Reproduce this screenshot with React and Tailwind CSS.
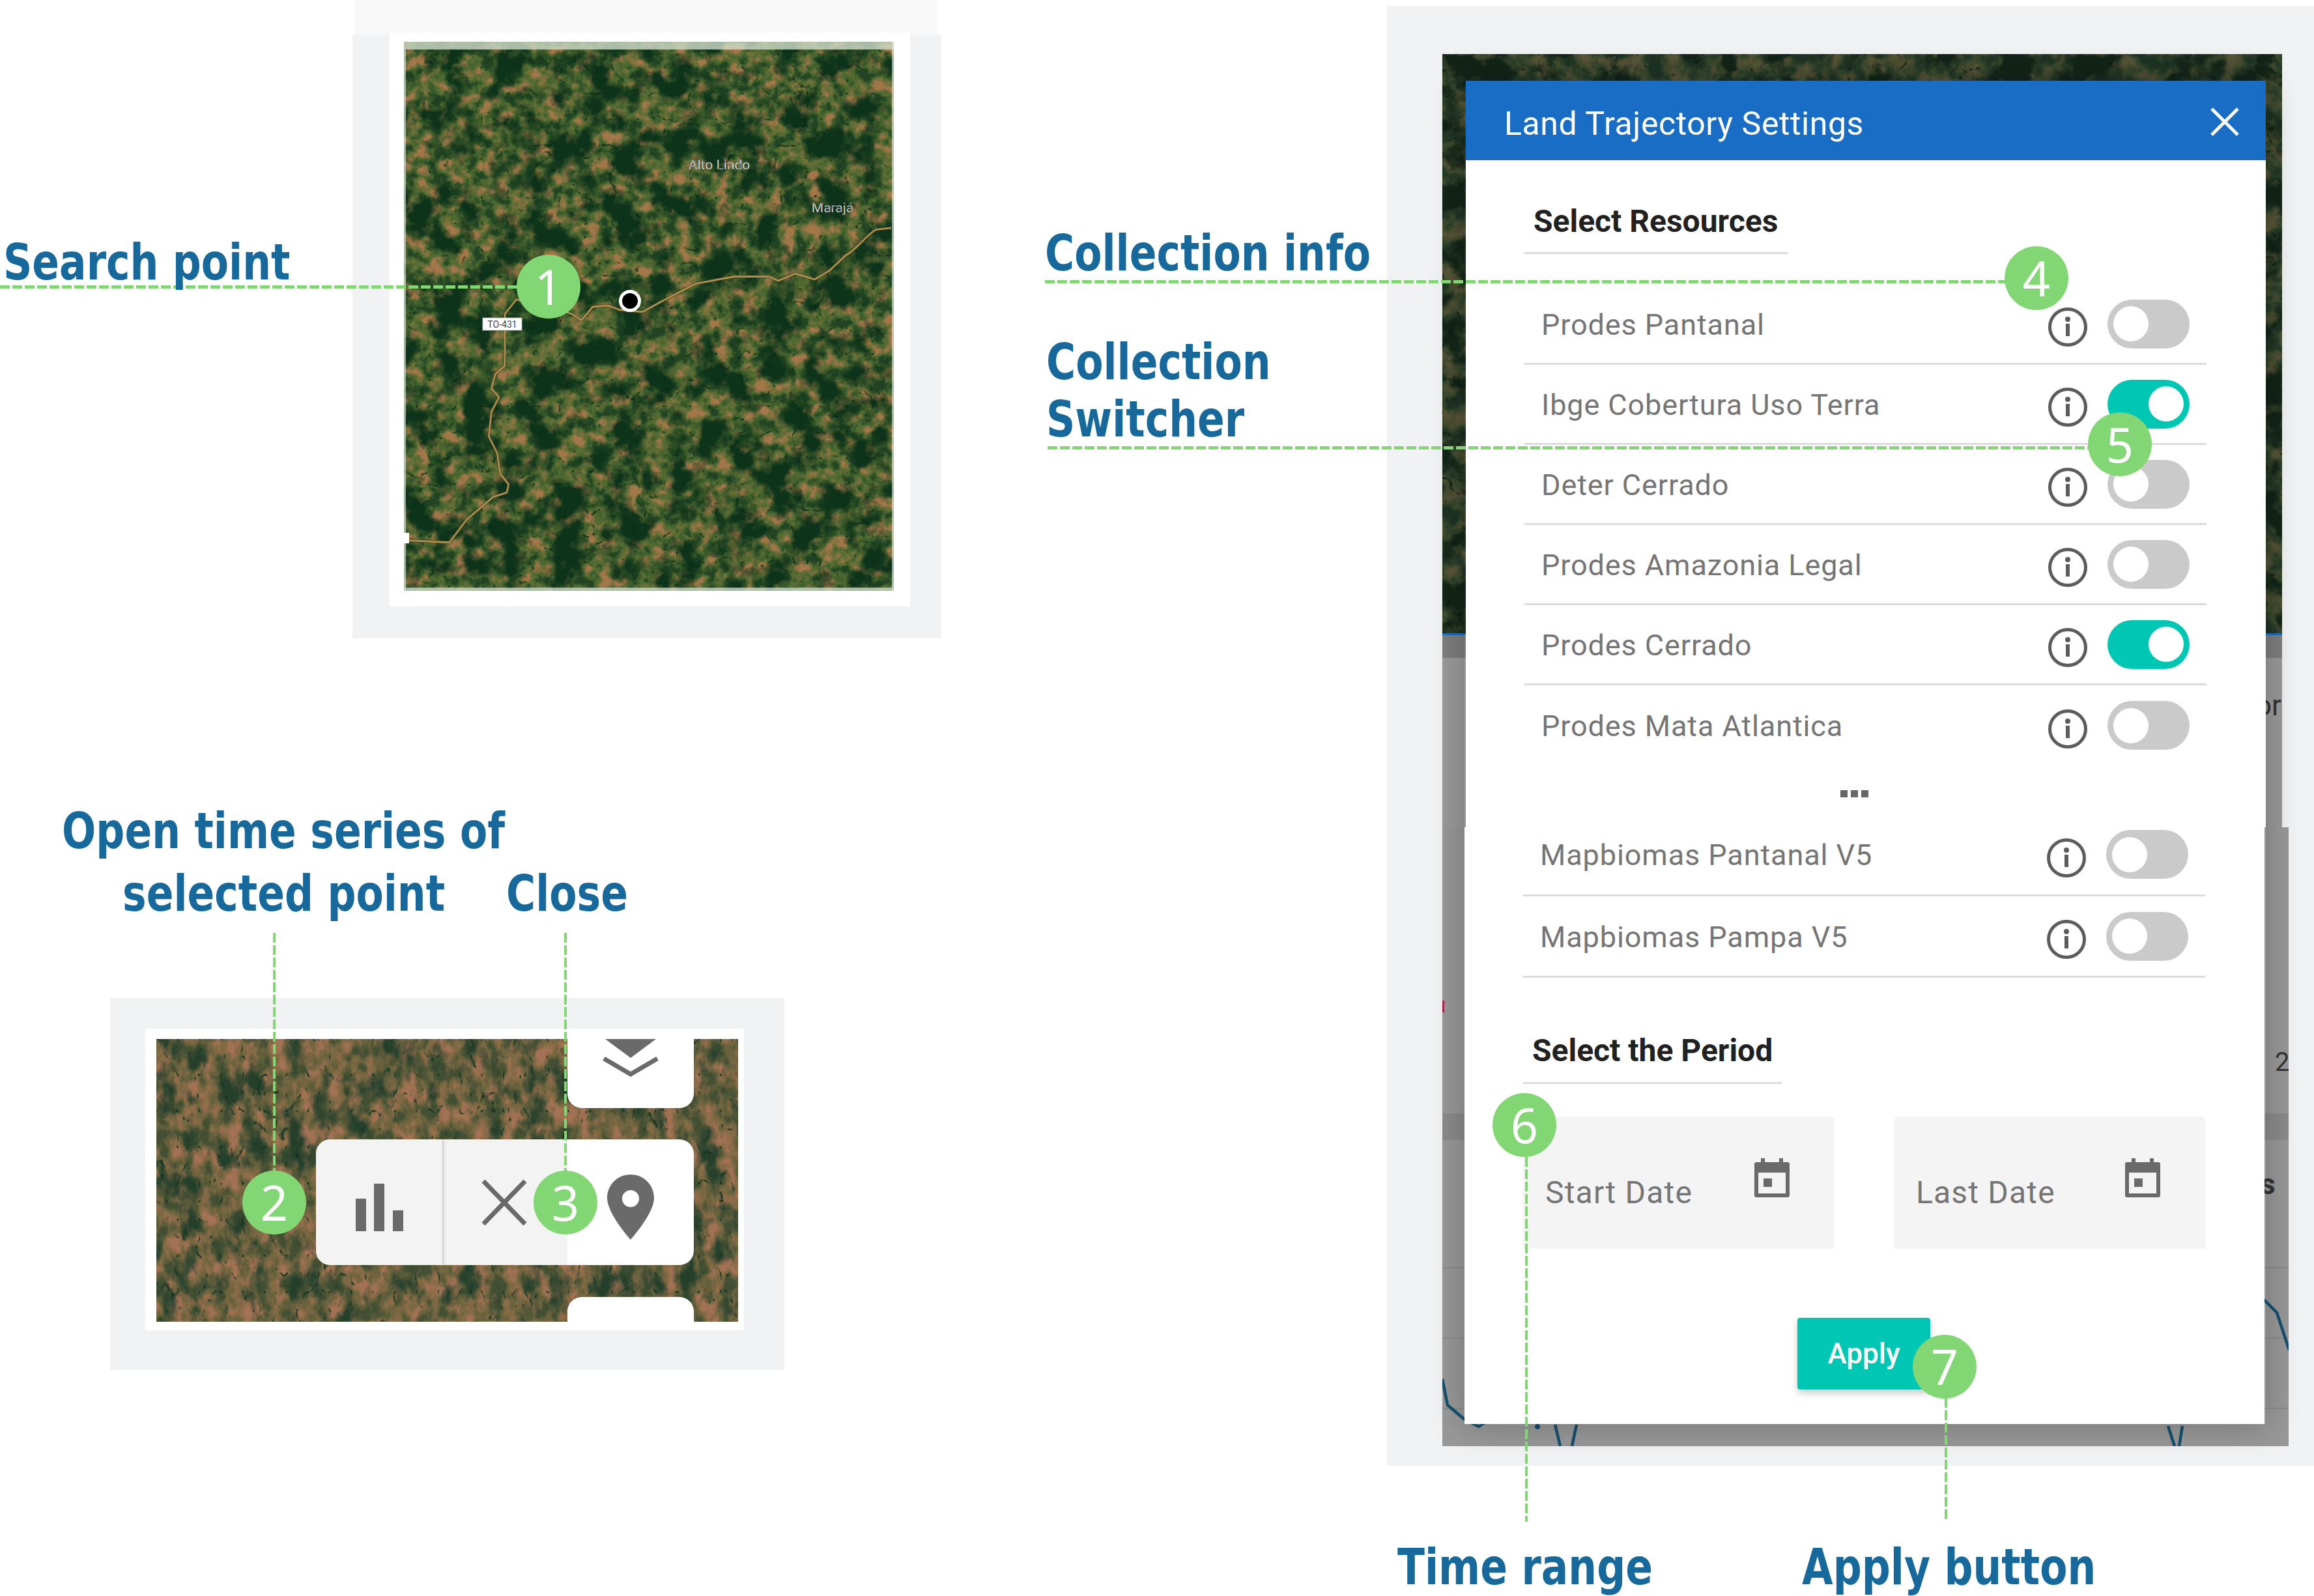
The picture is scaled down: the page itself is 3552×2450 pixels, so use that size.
import React from 'react';

const rows = [
  { name: 'Prodes Pantanal', on: false },
  { name: 'Ibge Cobertura Uso Terra', on: true },
  { name: 'Deter Cerrado', on: false },
  { name: 'Prodes Amazonia Legal', on: false },
  { name: 'Prodes Cerrado', on: true },
  { name: 'Prodes Mata Atlantica', on: false },
];

const labels = [
  { text: 'Search point', cls: 'left-[5px] top-[365px]' },
  { text: 'Collection info', cls: 'left-[1604px] top-[351px]' },
  { text: 'Collection', cls: 'left-[1606px] top-[518px]' },
  { text: 'Switcher', cls: 'left-[1606px] top-[606px]' },
  { text: 'Open time series of', cls: 'left-[95px] top-[1238px]' },
  { text: 'selected point', cls: 'left-[188px] top-[1334px]' },
  { text: 'Close', cls: 'left-[777px] top-[1334px]' },
  { text: 'Time range', cls: 'left-[2145px] top-[2368px]' },
  { text: 'Apply button', cls: 'left-[2766px] top-[2368px]' },
];

const badges = [
  { n: 1, cls: 'left-[793px] top-[391px]' },
  { n: 2, cls: 'left-[372px] top-[1797px]' },
  { n: 3, cls: 'left-[819px] top-[1797px]' },
  { n: 4, cls: 'left-[3077px] top-[378px]' },
  { n: 5, cls: 'left-[3205px] top-[633px]' },
  { n: 6, cls: 'left-[2291px] top-[1678px]' },
  { n: 7, cls: 'left-[2936px] top-[2049px]' },
];

const H_DASH = 'absolute h-[5px] bg-[repeating-linear-gradient(90deg,#82d673_0_15px,transparent_15px_19px)]';
const V_DASH = 'absolute w-[4px] bg-[repeating-linear-gradient(180deg,#82d673_0_15px,transparent_15px_19px)]';

const PALETTES = {
  // ground ramp (r, g, b tables), forest colour row, vein colour row
  forest: {
    r: '.14 .2 .26 .31 .37 .44 .54 .64',
    g: '.27 .33 .38 .41 .43 .44 .45 .47',
    b: '.14 .16 .18 .19 .21 .23 .26 .29',
    forest: '.05 .2 .1',
    veins: '.03 .16 .08',
    forestMatrix: '4.5 0 0 0 -1.95',
  },
  warm: {
    r: '.26 .32 .38 .43 .48 .53 .58 .64',
    g: '.31 .34 .37 .39 .41 .42 .43 .45',
    b: '.2 .22 .23 .25 .26 .28 .3 .33',
    forest: '.14 .25 .17',
    veins: '.03 .18 .12',
    forestMatrix: '4 0 0 0 -2',
  },
  dim: {
    r: '.12 .14 .16 .2 .24 .28 .3 .34',
    g: '.2 .22 .24 .27 .29 .3 .31 .33',
    b: '.14 .15 .16 .17 .18 .19 .2 .22',
    forest: '.07 .14 .09',
    veins: '.05 .1 .07',
    forestMatrix: '6 0 0 0 -2.8',
  },
};

function Satellite({ id, seed, fine, patch, vein, w, h, tone, children }) {
  // three noise layers: mottled ground, forest patches, dark creek lines
  const p = PALETTES[tone];
  const [fr, fg, fb] = p.forest.split(' ');
  const [vr, vg, vb] = p.veins.split(' ');
  return (
    <svg width={w} height={h} viewBox={`0 0 ${w} ${h}`} className="block">
      <defs>
        <filter id={`${id}-ground`} x="0" y="0" width="100%" height="100%" colorInterpolationFilters="sRGB">
          <feTurbulence type="fractalNoise" baseFrequency={fine} numOctaves="5" seed={seed} />
          <feColorMatrix type="matrix" values="2.4 0 0 0 -.7  2.4 0 0 0 -.7  2.4 0 0 0 -.7  0 0 0 0 1" />
          <feComponentTransfer>
            <feFuncR type="table" tableValues={p.r} />
            <feFuncG type="table" tableValues={p.g} />
            <feFuncB type="table" tableValues={p.b} />
          </feComponentTransfer>
        </filter>
        <filter id={`${id}-forest`} x="0" y="0" width="100%" height="100%" colorInterpolationFilters="sRGB">
          <feTurbulence type="fractalNoise" baseFrequency={patch} numOctaves="6" seed={Number(seed) + 3} />
          <feColorMatrix type="matrix" values={`0 0 0 0 ${fr}  0 0 0 0 ${fg}  0 0 0 0 ${fb}  ${p.forestMatrix}`} />
        </filter>
        <filter id={`${id}-veins`} x="0" y="0" width="100%" height="100%" colorInterpolationFilters="sRGB">
          <feTurbulence type="turbulence" baseFrequency={vein} numOctaves="3" seed={Number(seed) + 9} />
          <feColorMatrix type="matrix" values={`0 0 0 0 ${vr}  0 0 0 0 ${vg}  0 0 0 0 ${vb}  -12 0 0 0 1.1`} />
        </filter>
      </defs>
      <rect width={w} height={h} filter={`url(#${id}-ground)`} />
      <rect width={w} height={h} filter={`url(#${id}-forest)`} />
      <rect width={w} height={h} filter={`url(#${id}-veins)`} />
      {children}
    </svg>
  );
}

function Badge({ n, cls }) {
  return (
    <div className={`absolute ${cls} flex h-[98px] w-[98px] items-center justify-center rounded-full bg-[#82d673] text-[74px] leading-none text-white [font-family:'Noto_Sans',sans-serif]`}>
      {n}
    </div>
  );
}

function InfoIcon() {
  return (
    <svg width="62" height="62" viewBox="0 0 62 62" className="mt-[10px] shrink-0">
      <circle cx="31" cy="31" r="27.5" fill="none" stroke="#5c5c5c" strokeWidth="5" />
      <circle cx="31" cy="19" r="4" fill="#5c5c5c" />
      <rect x="28" y="26" width="6" height="19" fill="#5c5c5c" />
    </svg>
  );
}

function Toggle({ on }) {
  return (
    <div className={`flex h-[75px] w-[126px] items-center rounded-full px-[9px] ${on ? 'justify-end bg-[#00c6b4]' : 'justify-start bg-[#cacaca]'}`}>
      <div className="h-[54px] w-[54px] rounded-full bg-white" />
    </div>
  );
}

function Row({ name, on, cls }) {
  return (
    <div className={`flex items-center ${cls}`}>
      <span className="flex-1 pl-[26px] pt-[2px] text-[45px] leading-none tracking-[0.02em] text-[#757575]">{name}</span>
      <InfoIcon />
      <div className="ml-[30px] mr-[26px]"><Toggle on={on} /></div>
    </div>
  );
}

function CalendarIcon() {
  return (
    <svg width="56" height="60" viewBox="0 0 56 60" className="shrink-0">
      <rect x="11" y="0" width="6" height="10" fill="#6a6a6a" />
      <rect x="39" y="0" width="6" height="10" fill="#6a6a6a" />
      <path d="M4 6h48a3 3 0 0 1 3 3v48a3 3 0 0 1-3 3H4a3 3 0 0 1-3-3V9a3 3 0 0 1 3-3zM7 22v32h42V22z" fill="#6a6a6a" fillRule="evenodd" />
      <rect x="15" y="31" width="13" height="13" fill="#6a6a6a" />
    </svg>
  );
}

function DateField({ label }) {
  return (
    <div className="flex h-[203px] items-start justify-between rounded-t-[8px] bg-[#f4f4f5] pl-[34px] pr-[68px]">
      <span className="pt-[93px] text-[48px] leading-none tracking-[0.025em] text-[#757575]">{label}</span>
      <div className="pt-[64px]"><CalendarIcon /></div>
    </div>
  );
}

function SearchMap() {
  const road = 'M1410 548L1370 552C1340 570 1320 600 1290 615L1250 650L1210 672L1160 658L1115 675L1090 665L1000 665L900 682L820 720L760 750L700 745L670 735L630 738L600 770L575 755L520 740L430 720L400 755L400 880L375 900L365 935L385 955L365 990L358 1050L380 1090L388 1140L410 1165L405 1185L370 1195L300 1250L255 1305L150 1300';
  return (
    <Satellite id="sat-a" seed="11" fine="0.05" patch="0.022" vein="0.025" w={752} h={843} tone="forest">
      <rect width="752" height="12" fill="#cfdccb" opacity=".8" />
      <rect y="12" width="3" height="831" fill="#d7e2d4" opacity=".7" />
      <rect x="749" y="0" width="3" height="843" fill="#d7e2d4" opacity=".7" />
      <rect y="838" width="752" height="5" fill="#c9d8c6" opacity=".8" />
      <g transform="scale(0.587,0.638) translate(-136,-100)" fill="none" strokeLinejoin="round">
        <path d={road} stroke="#3a3a22" strokeWidth="8" opacity=".6" />
        <path d={road} stroke="#b08f4e" strokeWidth="4.5" />
      </g>
      <rect x="121" y="424" width="60" height="19" fill="#fff" stroke="#bbb" />
      <text x="151" y="439" textAnchor="middle" fontSize="14" fontFamily="Roboto" fill="#444">TO-431</text>
      <text x="484" y="196" fontSize="21" fontFamily="Roboto" fill="#f2f2f2" stroke="#2a2a2a" strokeWidth=".4" textAnchor="middle">Alto Lindo</text>
      <text x="658" y="262" fontSize="21" fontFamily="Roboto" fill="#f2f2f2" stroke="#2a2a2a" strokeWidth=".4" textAnchor="middle">Marajá</text>
      <rect x="0" y="754" width="8" height="16" fill="#fff" />
      <circle cx="347" cy="398" r="14.5" fill="#000" stroke="#fff" strokeWidth="5" />
    </Satellite>
  );
}

function Chevrons() {
  return (
    <svg width="90" height="60" viewBox="0 0 90 60" className="mx-auto block">
      <path d="M6 0H84L45 29z" fill="#6a6a6a" />
      <path d="M4 30L45 54L86 30" fill="none" stroke="#6a6a6a" strokeWidth="7" />
    </svg>
  );
}

function PointPopup() {
  return (
    <div className="mt-[48px] flex h-[193px] w-[580px] overflow-hidden rounded-[22px] bg-white">
      <div className="relative z-10 flex w-[194px] items-center justify-center bg-[#f3f3f4] shadow-[0_0_6px_rgba(0,0,0,0.35)]">
        <svg width="74" height="74" viewBox="0 0 74 74" className="mt-[16px]">
          <rect x="1" y="23" width="16" height="50" fill="#6a6a6a" />
          <rect x="29" y="0" width="16" height="73" fill="#6a6a6a" />
          <rect x="58" y="41" width="16" height="32" fill="#6a6a6a" />
        </svg>
      </div>
      <div className="flex w-[192px] items-center justify-center bg-[#f3f3f4]">
        <svg width="70" height="70" viewBox="0 0 70 70" className="ml-[-2px]">
          <path d="M3 2L67 68M67 2L3 68" fill="none" stroke="#6a6a6a" strokeWidth="7" />
        </svg>
      </div>
      <div className="flex flex-1 items-center justify-center">
        <svg width="72" height="100" viewBox="0 0 72 100" className="mt-[14px]">
          <path fillRule="evenodd" d="M36 0C16 0 0 16 0 36C0 60 36 100 36 100S72 60 72 36C72 16 56 0 36 0ZM36 24A13 13 0 1 1 36 50A13 13 0 0 1 36 24Z" fill="#6a6a6a" />
        </svg>
      </div>
    </div>
  );
}

function PointPanel() {
  return (
    <div className="absolute left-[169px] top-[1532px] h-[571px] w-[1035px] bg-[#f1f2f4] pl-[54px] pt-[47px]">
      <div className="h-[463px] w-[919px] bg-white pl-[17px] pt-[16px]">
        <div className="relative h-[434px] w-[893px] overflow-hidden">
          <Satellite id="sat-b" seed="23" fine="0.045 0.03" patch="0.03 0.02" vein="0.03 0.018" w={893} h={434} tone="warm" />
          <div className="absolute inset-0 flex flex-col items-end pr-[68px]">
            <div className="h-[106px] w-[194px] rounded-b-[22px] bg-white"><Chevrons /></div>
            <PointPopup />
            <div className="mt-[49px] h-[38px] w-[194px] rounded-t-[22px] bg-white" />
          </div>
        </div>
      </div>
    </div>
  );
}

function SettingsModal() {
  return (
    <div className="absolute left-[119px] top-[115px] w-[1230px] shadow-[0_0_50px_rgba(0,0,0,0.25)] [font-family:Roboto,sans-serif]">
      <div className="ml-[2px] h-[1146px] w-[1228px] bg-white">
        <div className="flex h-[122px] items-center justify-between bg-[#1a6dc4] pl-[59px] pr-[41px]">
          <span className="mt-[10px] text-[50px] leading-none tracking-[0.012em] text-white">Land Trajectory Settings</span>
          <svg width="44" height="44" viewBox="0 0 44 44" className="mt-[4px]">
            <path d="M2 2L42 42M42 2L2 42" fill="none" stroke="#fff" strokeWidth="5" />
          </svg>
        </div>
        <div className="ml-[90px] flex h-[144px] w-[404px] items-end border-b-[3px] border-[#dcdcdc] pb-[23px] pl-[14px]">
          <span className="text-[48px] font-bold leading-none text-[#212121]">Select Resources</span>
        </div>
        <div className="mx-[90px] mt-[47px] w-[1047px]">
          {rows.map((r, i) => (
            <Row key={r.name} name={r.name} on={r.on} cls={`h-[123px] ${i < rows.length - 1 ? 'border-b-[3px] border-[#dcdcdc]' : ''}`} />
          ))}
        </div>
        <div className="ml-[575px] mt-[38px] flex gap-[5px]">
          <div className="h-[11px] w-[11px] bg-[#666]" />
          <div className="h-[11px] w-[11px] bg-[#666]" />
          <div className="h-[11px] w-[11px] bg-[#666]" />
        </div>
      </div>
      <div className="h-[916px] w-[1228px] bg-white">
        <div className="mx-[90px] w-[1047px]">
          <Row name="Mapbiomas Pantanal V5" on={false} cls="h-[106px] border-b-[3px] border-[#dcdcdc] pb-[20px]" />
          <Row name="Mapbiomas Pampa V5" on={false} cls="h-[125px] border-b-[3px] border-[#dcdcdc]" />
        </div>
        <div className="ml-[90px] flex h-[163px] w-[397px] items-end border-b-[3px] border-[#dcdcdc] pb-[24px] pl-[14px]">
          <span className="text-[48px] font-bold leading-none text-[#212121]">Select the Period</span>
        </div>
        <div className="mx-[90px] mt-[50px] grid w-[1047px] grid-cols-2 gap-[91px]">
          <DateField label="Start Date" />
          <DateField label="Last Date" />
        </div>
        <div className="ml-[511px] mt-[106px] flex h-[110px] w-[204px] items-center justify-center rounded-[4px] bg-[#00c6b4] text-[44px] font-medium leading-none text-white shadow-[0_6px_12px_rgba(0,0,0,0.2)]">
          Apply
        </div>
      </div>
    </div>
  );
}

function BackdropChart() {
  return (
    <div className="relative h-[950px] w-[1299px] overflow-hidden bg-[#989898]">
      <div className="absolute left-0 top-[439px] h-[41px] w-full bg-[#8b8b8b]" />
      <div className="absolute left-0 top-[675px] h-[2px] w-full bg-[#8a8a8a]" />
      <div className="absolute left-0 top-[783px] h-[2px] w-full bg-[#8a8a8a]" />
      <div className="absolute left-0 top-[891px] h-[2px] w-full bg-[#8a8a8a]" />
      <div className="absolute left-0 top-[266px] h-[18px] w-[3px] bg-[#b0244a]" />
      <span className="absolute left-[1278px] top-[341px] text-[40px] leading-none text-[#333]">2</span>
      <span className="absolute left-[1256px] top-[526px] text-[44px] font-bold leading-none text-[#333]">s</span>
      <svg width="1299" height="950" viewBox="2214 1270 1299 950" className="absolute left-0 top-0">
        <path d="M2214 2117L2222 2157L2247 2178L2270 2190L2285 2180M2387 2187L2395 2220M2413 2220L2420 2187M3328 2189L3338 2220M3345 2220L3350 2189M3475 1995L3495 2015L3514 2073" fill="none" stroke="#14506f" strokeWidth="4.5" />
        <circle cx="2360" cy="2190" r="4" fill="#14506f" />
      </svg>
    </div>
  );
}

export default function App() {
  return (
    <div className="relative h-[2450px] w-[3552px] overflow-hidden bg-white [font-family:Roboto,sans-serif]">
      {/* search point panel */}
      <div className="absolute left-[545px] top-0 h-[54px] w-[893px] bg-[#f8f8f8]" />
      <div className="absolute left-[541px] top-[54px] h-[926px] w-[904px] bg-[#f1f2f4] pl-[57px]">
        <div className="-mt-[4px] h-[881px] w-[799px] bg-white pl-[22px] pt-[14px]">
          <SearchMap />
        </div>
      </div>

      {/* point popup panel */}
      <PointPanel />

      {/* settings panel */}
      <div className="absolute left-[2129px] top-[9px] h-[2241px] w-[1423px] bg-[#f1f2f4] pl-[85px] pt-[74px]">
        <Satellite id="sat-c" seed="5" fine="0.035" patch="0.02" vein="0.02" w={1289} h={889} tone="dim" />
        <div className="h-[3px] w-[1289px] bg-[#1a6dc4]" />
        <div className="relative h-[295px] w-[1289px] overflow-hidden bg-gradient-to-b from-[#7e7e7e] from-[12%] to-[#9a9a9a] to-[12%]">
          <span className="absolute left-[1248px] top-[86px] text-[44px] leading-none text-[#333]">or</span>
        </div>
        <BackdropChart />
        <SettingsModal />
      </div>

      {/* callout lines */}
      <div className={`${H_DASH} left-0 top-[438px] w-[797px]`} />
      <div className={`${H_DASH} left-[1604px] top-[430px] w-[1478px]`} />
      <div className={`${H_DASH} left-[1608px] top-[685px] w-[1600px]`} />
      <div className={`${V_DASH} left-[419px] top-[1432px] h-[366px]`} />
      <div className={`${V_DASH} left-[866px] top-[1432px] h-[366px]`} />
      <div className={`${V_DASH} left-[2341px] top-[1776px] h-[560px]`} />
      <div className={`${V_DASH} left-[2985px] top-[2146px] h-[190px]`} />

      {badges.map((b) => <Badge key={b.n} n={b.n} cls={b.cls} />)}

      {labels.map((l) => (
        <div key={l.text} className={`absolute ${l.cls} origin-left scale-x-[0.81] whitespace-nowrap text-[76px] font-bold leading-none text-[#17689b] [font-family:'DejaVu_Sans',sans-serif]`}>
          {l.text}
        </div>
      ))}
    </div>
  );
}
